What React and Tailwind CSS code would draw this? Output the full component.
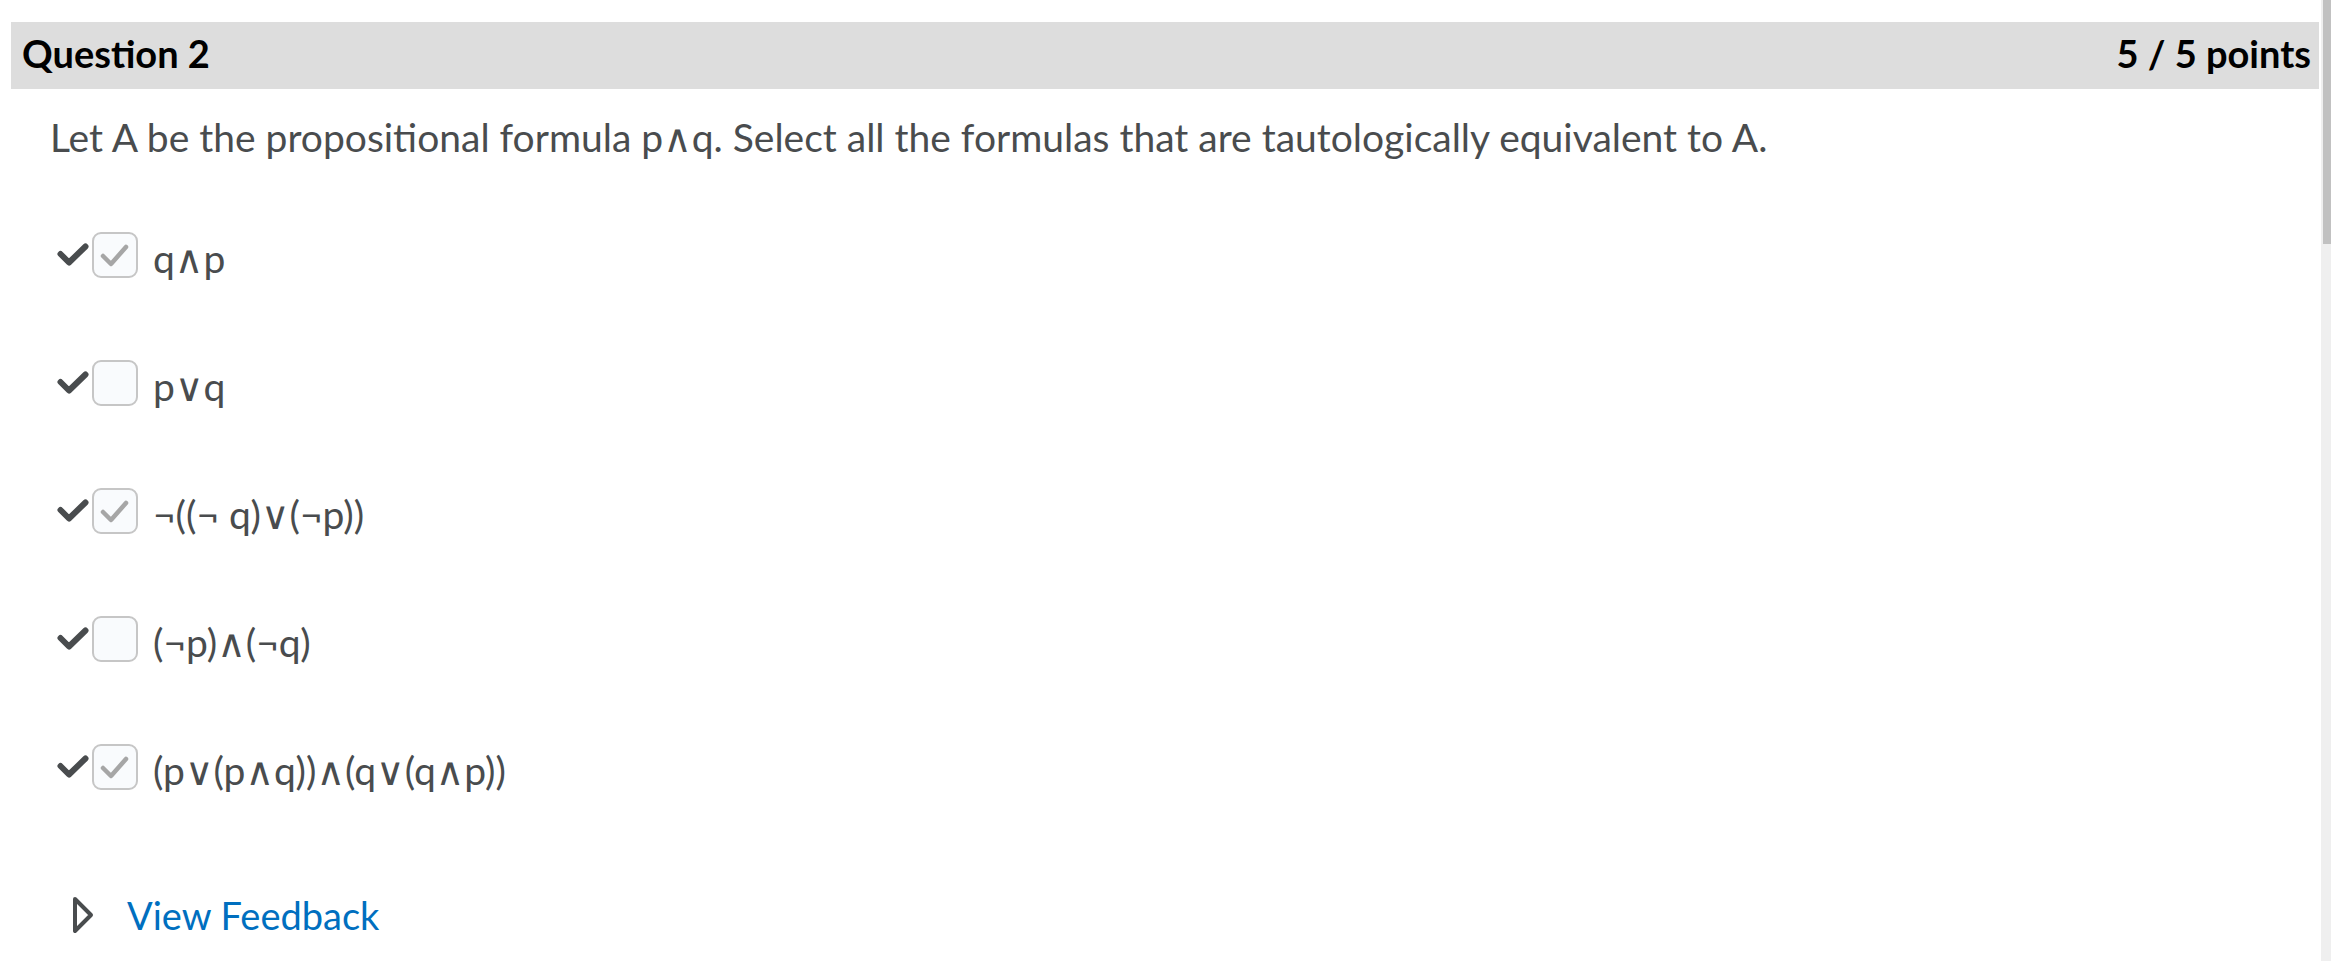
import React from "react";

const options = [
  { label: "q∧p", checked: true },
  { label: "p∨q", checked: false },
  { label: "¬((¬ q)∨(¬p))", checked: true },
  { label: "(¬p)∧(¬q)", checked: false },
  { label: "(p∨(p∧q))∧(q∨(q∧p))", checked: true },
];

// los operadores van con DejaVu, Lato no los dibuja igual
const Formula = ({ text }) => (
  <>
    {text.split(/([∧∨])/).map((part, i) =>
      part === "∧" || part === "∨" ? (
        <span key={i} style={{ fontFamily: "'DejaVu Sans ExtraLight', 'DejaVu Sans', sans-serif" }}>
          {part}
        </span>
      ) : (
        <span key={i}>{part}</span>
      )
    )}
  </>
);

const BigCheck = () => (
  <svg width="32" height="24" viewBox="0 0 32 24" className="shrink-0">
    <polyline
      points="3.5,11 12,19.5 28.5,3.5"
      fill="none"
      stroke="#494c4e"
      strokeWidth="6"
      strokeLinecap="round"
      strokeLinejoin="round"
    />
  </svg>
);

const Checkbox = ({ checked }) => (
  <div className="w-[46px] h-[46px] shrink-0 rounded-[9px] border-2 border-[#c6c6c6] bg-[#f9fbfd] ml-[3px]">
    {checked && (
      <svg width="42" height="42" viewBox="0 0 42 42">
        <polyline
          points="9,22 17,30 32,13"
          fill="none"
          stroke="#a6a6a6"
          strokeWidth="4.5"
          strokeLinecap="round"
          strokeLinejoin="round"
        />
      </svg>
    )}
  </div>
);

const App = () => {
  return (
    <div className="flex w-full h-screen bg-white overflow-hidden">
      {/* contenido */}
      <div className="flex-1 pl-[11px] pr-[2px] pt-[22px]">
        <div
          className="h-[67px] bg-[#dddddd] flex justify-between items-start pt-[8px] pl-[11px] pr-[8px] text-black text-[38px] font-bold leading-[46px]"
          style={{ fontFamily: "Lato, 'Liberation Sans', sans-serif" }}
        >
          <span>Question 2</span>
          <span>5 / 5 points</span>
        </div>

        <div
          className="pl-[39px] text-[#494c4e]"
          style={{ fontFamily: "Lato, 'DejaVu Sans', sans-serif" }}
        >
          <p className="mt-[26px] text-[39px] leading-[44px]">
            Let A be the propositional formula p<Formula text="∧" />q. Select all the formulas that are tautologically equivalent to A.
          </p>

          {/* Opciones */}
          <div className="mt-[71px] flex flex-col gap-[82px]">
            {options.map((opt, i) => (
              <div key={i} className="flex items-center h-[46px] ml-[7px]">
                <BigCheck />
                <Checkbox checked={opt.checked} />
                <span className="ml-[15px] pt-[8px] text-[39px] leading-[44px] whitespace-pre">
                  <Formula text={opt.label} />
                </span>
              </div>
            ))}
          </div>

          {/* View Feedback */}
          <div className="mt-[102px] flex items-center ml-[22px]">
            <svg width="22" height="38" viewBox="0 0 22 38" className="shrink-0">
              <polygon
                points="3,3 19,19 3,35"
                fill="none"
                stroke="#494c4e"
                strokeWidth="4"
                strokeLinejoin="round"
              />
            </svg>
            <span className="ml-[33px] text-[38px] leading-[46px] text-[#006fbf]">View Feedback</span>
          </div>
        </div>
      </div>

      {/* scrollbar */}
      <div className="w-[10px] h-full bg-[#efefef] flex justify-end">
        <div className="w-[8px] h-[244px] bg-[#c1c1c1]" />
      </div>
    </div>
  );
};

export default App;
